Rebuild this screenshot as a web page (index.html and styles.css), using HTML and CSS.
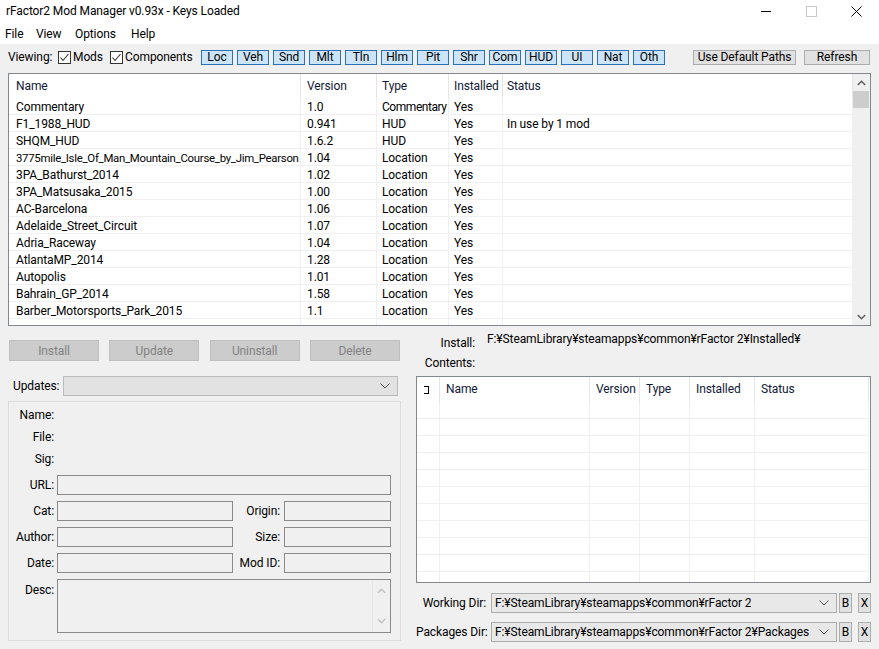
FILE: index.html
```html
<!DOCTYPE html>
<html>
<head>
<meta charset="utf-8">
<title>rFactor2 Mod Manager</title>
<link rel="stylesheet" href="styles.css">
</head>
<body>
<div class="titlebar">
  <span class="title">rFactor2 Mod Manager v0.93x - Keys Loaded</span>
  <div class="wc"><svg width="11" height="11" viewBox="0 0 11 11"><line x1="0" y1="5.5" x2="10" y2="5.5" stroke="#000" stroke-width="1"/></svg></div>
  <div class="wc"><svg width="11" height="11" viewBox="0 0 11 11"><rect x="0.5" y="0.5" width="10" height="10" fill="none" stroke="#c6c6c6" stroke-width="1"/></svg></div>
  <div class="wc"><svg width="11" height="11" viewBox="0 0 11 11"><path d="M0.5 0.5L10.5 10.5M10.5 0.5L0.5 10.5" stroke="#000" stroke-width="1"/></svg></div>
</div>
<div class="menubar">
  <span class="m-file">File</span>
  <span class="m-view">View</span>
  <span class="m-opt">Options</span>
  <span class="m-help">Help</span>
</div>
<div class="toolbar">
  <span class="viewing">Viewing:</span>
  <label class="chk mods"><span class="box"><svg width="11" height="11" viewBox="0 0 11 11"><polyline points="1.5,5.5 4,8.5 9.5,2" fill="none" stroke="#333" stroke-width="1.1"/></svg></span>Mods</label>
  <label class="chk comp"><span class="box"><svg width="11" height="11" viewBox="0 0 11 11"><polyline points="1.5,5.5 4,8.5 9.5,2" fill="none" stroke="#333" stroke-width="1.1"/></svg></span>Components</label>
  <div class="filters">
    <span class="fbtn">Loc</span><span class="fbtn">Veh</span><span class="fbtn">Snd</span><span class="fbtn">Mlt</span><span class="fbtn">Tln</span><span class="fbtn">Hlm</span><span class="fbtn">Pit</span><span class="fbtn">Shr</span><span class="fbtn">Com</span><span class="fbtn">HUD</span><span class="fbtn">UI</span><span class="fbtn">Nat</span><span class="fbtn">Oth</span>
  </div>
  <div class="tools">
    <span class="gbtn udp">Use Default Paths</span>
    <span class="gbtn refresh">Refresh</span>
  </div>
</div>

<div class="modlist">
  <div class="lv">
    <div class="lv-row lv-head">
      <span>Name</span><span>Version</span><span>Type</span><span>Installed</span><span>Status</span>
    </div>
    <div class="lv-row"><span>Commentary</span><span>1.0</span><span class="snug">Commentary</span><span>Yes</span><span></span></div>
    <div class="lv-row"><span>F1_1988_HUD</span><span>0.941</span><span>HUD</span><span>Yes</span><span>In use by 1 mod</span></div>
    <div class="lv-row"><span>SHQM_HUD</span><span>1.6.2</span><span>HUD</span><span>Yes</span><span></span></div>
    <div class="lv-row"><span class="tight">3775mile_Isle_Of_Man_Mountain_Course_by_Jim_Pearson</span><span>1.04</span><span>Location</span><span>Yes</span><span></span></div>
    <div class="lv-row"><span>3PA_Bathurst_2014</span><span>1.02</span><span>Location</span><span>Yes</span><span></span></div>
    <div class="lv-row"><span>3PA_Matsusaka_2015</span><span>1.00</span><span>Location</span><span>Yes</span><span></span></div>
    <div class="lv-row"><span>AC-Barcelona</span><span>1.06</span><span>Location</span><span>Yes</span><span></span></div>
    <div class="lv-row"><span>Adelaide_Street_Circuit</span><span>1.07</span><span>Location</span><span>Yes</span><span></span></div>
    <div class="lv-row"><span>Adria_Raceway</span><span>1.04</span><span>Location</span><span>Yes</span><span></span></div>
    <div class="lv-row"><span>AtlantaMP_2014</span><span>1.28</span><span>Location</span><span>Yes</span><span></span></div>
    <div class="lv-row"><span>Autopolis</span><span>1.01</span><span>Location</span><span>Yes</span><span></span></div>
    <div class="lv-row"><span>Bahrain_GP_2014</span><span>1.58</span><span>Location</span><span>Yes</span><span></span></div>
    <div class="lv-row"><span>Barber_Motorsports_Park_2015</span><span>1.1</span><span>Location</span><span>Yes</span><span></span></div>
    <div class="lv-row"><span></span><span></span><span></span><span></span><span></span></div>
  </div>
  <div class="vscroll">
    <div class="arrow"><svg width="9" height="6" viewBox="0 0 9 6"><polyline points="0.8,5 4.5,1.3 8.2,5" fill="none" stroke="#606060" stroke-width="1.6"/></svg></div>
    <div class="thumb"></div>
    <div class="track"></div>
    <div class="arrow"><svg width="9" height="6" viewBox="0 0 9 6"><polyline points="0.8,1 4.5,4.7 8.2,1" fill="none" stroke="#606060" stroke-width="1.6"/></svg></div>
  </div>
</div>

<div class="lower">
  <div class="left">
    <div class="actions">
      <span class="dbtn">Install</span>
      <span class="dbtn">Update</span>
      <span class="dbtn">Uninstall</span>
      <span class="dbtn">Delete</span>
    </div>
    <div class="updates">
      <span class="upd-label">Updates:</span>
      <div class="combo disabled"><span class="combo-text"></span><svg class="chev" width="10" height="6" viewBox="0 0 10 6"><polyline points="0.5,0.5 5,5 9.5,0.5" fill="none" stroke="#555" stroke-width="1"/></svg></div>
    </div>
    <div class="group">
      <div class="frow text"><span class="lbl">Name:</span></div>
      <div class="frow text"><span class="lbl">File:</span></div>
      <div class="frow text"><span class="lbl">Sig:</span></div>
      <div class="frow field first"><span class="lbl">URL:</span><span class="inp wide"></span></div>
      <div class="frow field"><span class="lbl">Cat:</span><span class="inp half"></span><span class="lbl2">Origin:</span><span class="inp small"></span></div>
      <div class="frow field"><span class="lbl">Author:</span><span class="inp half"></span><span class="lbl2">Size:</span><span class="inp small"></span></div>
      <div class="frow field"><span class="lbl">Date:</span><span class="inp half"></span><span class="lbl2">Mod ID:</span><span class="inp small"></span></div>
      <div class="frow desc"><span class="lbl top">Desc:</span>
        <div class="inp textarea">
          <div class="ta-body"></div>
          <div class="ta-scroll">
            <svg width="9" height="6" viewBox="0 0 9 6"><polyline points="0.8,5 4.5,1.3 8.2,5" fill="none" stroke="#c2c2c2" stroke-width="1.5"/></svg>
            <svg width="9" height="6" viewBox="0 0 9 6"><polyline points="0.8,1 4.5,4.7 8.2,1" fill="none" stroke="#c2c2c2" stroke-width="1.5"/></svg>
          </div>
        </div>
      </div>
    </div>
  </div>

  <div class="right">
    <div class="kv install">
      <span class="klbl">Install:</span>
      <span class="kval">F:¥SteamLibrary¥steamapps¥common¥rFactor 2¥Installed¥</span>
    </div>
    <div class="kv contents">
      <span class="klbl">Contents:</span>
    </div>
    <div class="clist">
      <div class="c-row c-head">
        <span><i class="cbox"></i></span><span>Name</span><span>Version</span><span>Type</span><span>Installed</span><span>Status</span>
      </div>
      <div class="c-row"><span></span><span></span><span></span><span></span><span></span><span></span></div>
      <div class="c-row"><span></span><span></span><span></span><span></span><span></span><span></span></div>
      <div class="c-row"><span></span><span></span><span></span><span></span><span></span><span></span></div>
      <div class="c-row"><span></span><span></span><span></span><span></span><span></span><span></span></div>
      <div class="c-row"><span></span><span></span><span></span><span></span><span></span><span></span></div>
      <div class="c-row"><span></span><span></span><span></span><span></span><span></span><span></span></div>
      <div class="c-row"><span></span><span></span><span></span><span></span><span></span><span></span></div>
      <div class="c-row"><span></span><span></span><span></span><span></span><span></span><span></span></div>
      <div class="c-row"><span></span><span></span><span></span><span></span><span></span><span></span></div>
      <div class="c-row"><span></span><span></span><span></span><span></span><span></span><span></span></div>
      <div class="c-row"><span></span><span></span><span></span><span></span><span></span><span></span></div>
    </div>
    <div class="dir first">
      <span class="dlbl">Working Dir:</span>
      <div class="combo"><span class="combo-text">F:¥SteamLibrary¥steamapps¥common¥rFactor 2</span><svg class="chev" width="10" height="6" viewBox="0 0 10 6"><polyline points="0.5,0.5 5,5 9.5,0.5" fill="none" stroke="#555" stroke-width="1"/></svg></div>
      <span class="sbtn b">B</span>
      <span class="sbtn x">X</span>
    </div>
    <div class="dir">
      <span class="dlbl">Packages Dir:</span>
      <div class="combo"><span class="combo-text">F:¥SteamLibrary¥steamapps¥common¥rFactor 2¥Packages</span><svg class="chev" width="10" height="6" viewBox="0 0 10 6"><polyline points="0.5,0.5 5,5 9.5,0.5" fill="none" stroke="#555" stroke-width="1"/></svg></div>
      <span class="sbtn b">B</span>
      <span class="sbtn x">X</span>
    </div>
  </div>
</div>
</body>
</html>
```

FILE: styles.css
```css
* { box-sizing: border-box; margin: 0; padding: 0; }
html, body { width: 879px; height: 649px; overflow: hidden; }
body {
  background: #f0f0f0;
  font-family: Roboto, "Liberation Sans", Arial, sans-serif;
  font-size: 12px;
  letter-spacing: -0.1px;
  color: #000;
}

/* title bar */
.titlebar { height: 24px; background: #fff; display: flex; align-items: center; }
.title { flex: 1; padding-left: 6px; margin-top: -2px; }
.wc { width: 45px; height: 24px; display: flex; align-items: center; justify-content: center; margin-top: -2px; }
.wc svg { display: block; }

/* menu */
.menubar { height: 20px; background: #fff; display: flex; align-items: center; padding-left: 5px; }
.menubar span { display: inline-block; }
.m-file { width: 31px; }
.m-view { width: 39px; }
.m-opt { width: 56px; }

/* toolbar */
.toolbar { height: 26px; display: flex; align-items: center; padding-left: 8px; }
.viewing { width: 50px; }
.chk { display: flex; align-items: center; }
.chk.mods { width: 52px; }
.chk.comp { width: 91px; }
.box { width: 13px; height: 13px; border: 1px solid #333; background: #fff; margin-right: 2px; display: flex; align-items: center; justify-content: center; }
.box svg { display: block; }
.filters { display: flex; gap: 4px; }
.fbtn {
  width: 32px; height: 15px; background: #cce4f7; border: 1px solid #2d72b8;
  text-align: center; line-height: 13px;
}
.tools { margin-left: auto; margin-right: 9px; display: flex; gap: 8px; }
.gbtn { height: 15px; background: #e1e1e1; border: 1px solid #adadad; text-align: center; line-height: 13px; }
.udp { width: 103px; }
.refresh { width: 66px; }

/* main list view */
.modlist {
  margin: 3px 0 0 8px; width: 863px; height: 253px;
  border: 1px solid #828790; background: #fff;
  display: flex; overflow: hidden;
}
.lv { width: 844px; overflow: hidden; }
.lv-row { display: grid; grid-template-columns: 292px 76px 72px 54px 350px; height: 17px; }
.lv-row span {
  border-bottom: 1px solid #f0f0f0; border-right: 1px solid #f0f0f0;
  line-height: 18px; white-space: nowrap; overflow: hidden;
}
.lv-row span:nth-child(1) { padding-left: 7px; }
.lv-row span:nth-child(2) { padding-left: 6px; }
.lv-row span:nth-child(3) { padding-left: 5px; }
.lv-row span:nth-child(4) { padding-left: 5px; }
.lv-row span:nth-child(5) { padding-left: 4px; }
.lv-row span.tight { font-size: 11.4px; letter-spacing: -0.28px; }
.lv-row span.snug { letter-spacing: -0.45px; }
.lv-head { height: 24px; }
.lv-head span { line-height: 25px; border-bottom: none; border-right: 1px solid #e5e5e5; color: #101836; }

.vscroll { width: 17px; background: #f0f0f0; display: flex; flex-direction: column; }
.vscroll .arrow { height: 17px; display: flex; align-items: center; justify-content: center; }
.vscroll .arrow svg { display: block; }
.vscroll .thumb { height: 17px; margin: 0 1px 0 0; background: #cdcdcd; }
.vscroll .track { flex: 1; }

/* lower area */
.lower { display: flex; padding-left: 8px; }
.left { width: 393px; }
.right { width: 455px; margin-left: 15px; }

.actions { display: flex; justify-content: space-between; width: 391px; margin: 14px 0 0 1px; }
.dbtn {
  width: 90px; height: 21px; background: #cccccc; border: 1px solid #bfbfbf; color: #838383;
  display: flex; align-items: center; justify-content: center;
}

.updates { display: flex; align-items: center; margin-top: 15px; height: 20px; }
.upd-label { width: 55px; padding-left: 5px; }
.combo {
  height: 20px; background: #e8e8e8; border: 1px solid #adadad;
  display: flex; align-items: center; justify-content: space-between; padding: 0 7px 0 3px;
}
.combo.disabled { width: 335px; background: #e2e2e2; border-color: #bcbcbc; }
.combo-text { white-space: nowrap; overflow: hidden; }
.chev { display: block; flex: none; }

.group {
  margin-top: 5px; width: 393px; height: 240px;
  border: 1px solid #dcdcdc; padding-top: 2px;
}
.frow { display: flex; align-items: center; }
.frow.text { height: 22px; }
.frow.field { height: 20px; margin-top: 6px; }
.frow.field.first { margin-top: 5px; }
.frow.desc { height: 54px; margin-top: 6px; align-items: flex-start; }
.lbl { width: 45px; text-align: right; margin-right: 3px; flex: none; }
.lbl.top { margin-top: 4px; }
.lbl2 { width: 47px; text-align: right; margin-right: 4px; flex: none; }
.inp { height: 20px; background: #f0f0f0; border: 1px solid #8a8a8a; flex: none; }
.inp.wide { width: 334px; }
.inp.half { width: 176px; }
.inp.small { width: 107px; }
.inp.textarea { width: 334px; height: 54px; display: flex; }
.ta-body { flex: 1; }
.ta-scroll {
  width: 18px; border-left: 1px solid #e6e6e6;
  display: flex; flex-direction: column; justify-content: space-between; align-items: center;
  padding: 8px 0 8px;
}
.ta-scroll svg { display: block; }

/* right column */
.kv { display: flex; }
.kv.install { margin-top: 5px; height: 22px; }
.kv.contents { height: 20px; }
.klbl { width: 59px; text-align: right; flex: none; }
.install .klbl { line-height: 24px; }
.contents .klbl { line-height: 20px; }
.kval { margin-left: 12px; line-height: 16px; white-space: nowrap; }

.clist {
  margin-top: 3px; width: 455px; height: 207px;
  border: 1px solid #828790; background: #fff; overflow: hidden;
}
.c-row { display: grid; grid-template-columns: 23px 150px 50px 50px 65px 114px; height: 17px; }
.c-row span { border-bottom: 1px solid #f0f0f0; border-right: 1px solid #f0f0f0; padding-left: 5px; line-height: 16px; }
.c-head { height: 25px; }
.c-head span { border-bottom: none; border-right: 1px solid #e5e5e5; line-height: 25px; color: #101836; }
.c-head span:nth-child(n+2) { padding-left: 6px; }
.c-head span:first-child { padding-left: 7px; display: flex; align-items: center; }
.cbox { display: block; width: 5px; height: 8px; border: 1px solid #000; border-left: none; }

.dir { display: flex; align-items: center; height: 20px; margin-top: 9px; }
.dir.first { margin-top: 10px; }
.dlbl { width: 70px; text-align: right; margin-right: 5px; flex: none; white-space: nowrap; }
.dir .combo { width: 346px; flex: none; }
.sbtn {
  width: 13px; height: 20px; background: #e1e1e1; border: 1px solid #adadad;
  display: flex; align-items: center; justify-content: center; flex: none;
}
.sbtn.b { margin-left: 2px; }
.sbtn.x { margin-left: 6px; }
```
